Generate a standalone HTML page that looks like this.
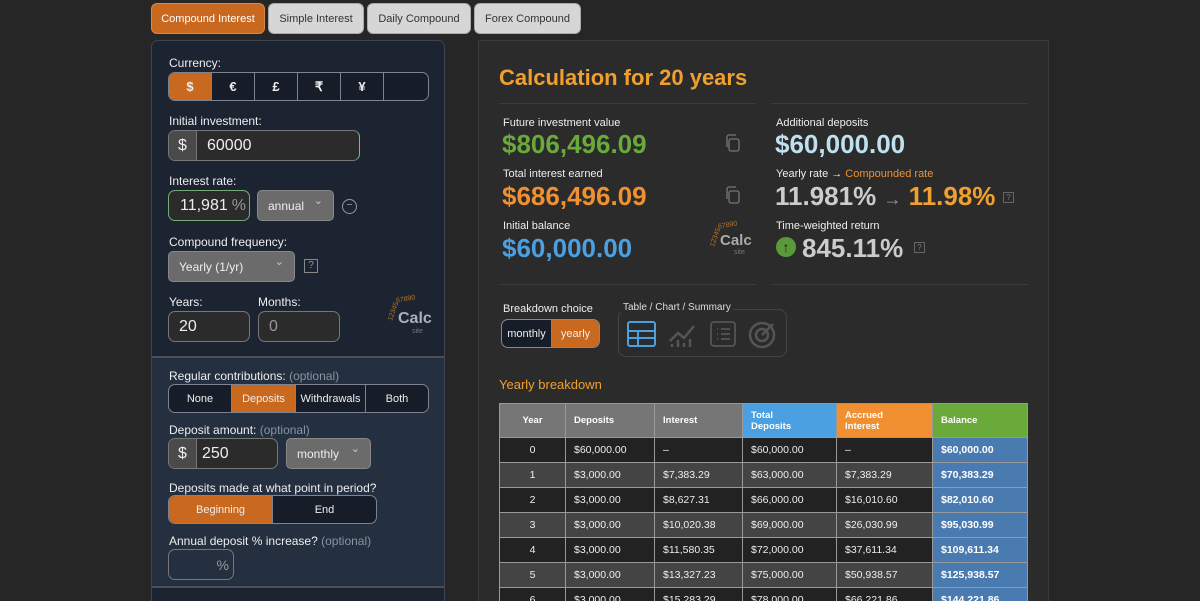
<!DOCTYPE html>
<html><head><meta charset="utf-8"><style>
*{box-sizing:border-box;margin:0;padding:0}
html,body{width:1200px;height:601px;overflow:hidden}
body{background:#262626;font-family:"Liberation Sans",sans-serif;position:relative;color:#e8e8e8}
.a{position:absolute}
.tab{position:absolute;top:3px;height:31px;border-radius:6px;background:#d6d6d6;color:#333;font-size:11px;display:flex;align-items:center;justify-content:center;border:1px solid #aaa}
.lp{position:absolute;left:151px;top:40px;width:294px;height:570px;background:#1c2331;border:1px solid #3c4455;border-radius:7px;overflow:hidden}
.lbl{position:absolute;left:17px;font-size:12px;color:#eee}
.opt{color:#8a93a0}
.grp{position:absolute;display:flex;border:1px solid #7d8390;border-radius:7px;overflow:hidden;background:#161c28}
.grp div{display:flex;align-items:center;justify-content:center;font-size:11px;color:#eee;border-right:1px solid #7d8390}
.grp div:last-child{border-right:none}
.on{background:#c8691f}
.inp{position:absolute;border:1px solid #777;border-radius:7px;background:#2b2b2b;display:flex;align-items:center;font-size:16px;color:#eee;overflow:hidden}
.sel{position:absolute;border:1px solid #888;border-radius:5px;background:#6b6b6b;font-size:12px;color:#eee;display:flex;align-items:center;padding-left:10px}
.sel:after{content:"⌄";position:absolute;right:10px;top:3px;font-size:11px;color:#ccc}
.rp{position:absolute;left:478px;top:40px;width:571px;height:570px;background:#2b2b2b;border:1px solid #3a3a3a}
.sl{position:absolute;font-size:11px;color:#eee}
.sv{position:absolute;font-size:26px;font-weight:bold}
table{position:absolute;left:499px;top:403px;border-collapse:collapse;font-size:10.5px}
td,th{border:1px solid #999;height:25px;padding-left:8px;text-align:left;color:#eee}
th{height:34px;background:#767676;font-weight:bold;color:#fff;font-size:9.5px}
tr:nth-child(even) td{background:#222}
tr:nth-child(odd) td{background:#444}
td.b{background:#4a7bb0!important;font-weight:bold;color:#fff}
td:first-child{text-align:center;padding:0}
.q{position:absolute;width:11px;height:11px;border:1px solid #666;font-size:8px;color:#777;text-align:center;line-height:9px}
.logo{position:absolute}
.logo .c{position:absolute;font-size:16px;font-weight:bold;color:#aab0bc}
.logo .n{position:absolute;font-size:7px;color:#b4742a}
</style></head><body>
<div class="tab" style="left:151px;width:114px;background:#c8691f;color:#fff;border-color:#d8894a">Compound Interest</div>
<div class="tab" style="left:268px;width:96px">Simple Interest</div>
<div class="tab" style="left:367px;width:104px">Daily Compound</div>
<div class="tab" style="left:474px;width:107px">Forex Compound</div>

<div class="lp">
<div class="lbl" style="top:15px">Currency:</div>
<div class="grp" style="left:16px;top:31px;width:261px;height:29px"><div class="on" style="width:43px;font-weight:bold;font-size:13px">$</div><div style="width:43px;font-size:13px;font-weight:bold">€</div><div style="width:43px;font-size:13px;font-weight:bold">£</div><div style="width:43px;font-size:13px;font-weight:bold">₹</div><div style="width:43px;font-size:13px;font-weight:bold">¥</div><div style="flex:1"></div></div>
<div class="lbl" style="top:73px">Initial investment:</div>
<div class="inp" style="left:16px;top:89px;width:192px;height:31px;border-right-color:#6c6"><span style="width:28px;height:100%;background:#4a4a4a;display:flex;align-items:center;justify-content:center;border-right:1px solid #777">$</span><span style="padding-left:10px">60000</span></div>
<div class="lbl" style="top:133px">Interest rate:</div>
<div class="inp" style="left:16px;top:149px;width:82px;height:31px;border-color:#7a7;padding-left:11px">11,981<span style="color:#999;margin-left:4px">%</span></div>
<div class="sel" style="left:105px;top:149px;width:77px;height:31px">annual</div>
<div class="a" style="left:190px;top:158px;width:15px;height:15px;border:1px solid #999;border-radius:50%;font-size:10px;color:#aaa;text-align:center;line-height:12px">−</div>
<div class="lbl" style="top:194px">Compound frequency:</div>
<div class="sel" style="left:16px;top:210px;width:127px;height:31px">Yearly (1/yr)</div>
<div class="q" style="left:152px;top:218px;width:14px;height:14px;line-height:12px;font-size:10px;border-color:#888;color:#999">?</div>
<div class="lbl" style="top:254px">Years:</div><div class="lbl" style="left:106px;top:254px">Months:</div>
<div class="inp" style="left:16px;top:270px;width:82px;height:31px;padding-left:10px">20</div>
<div class="inp" style="left:106px;top:270px;width:82px;height:31px;padding-left:10px;color:#999">0</div>
<div class="logo" style="left:238px;top:255px"><div class="n" style="left:6px;top:0;transform:rotate(-10deg)">67890</div><div class="n" style="left:-6px;top:12px;transform:rotate(-70deg)">12345</div><div class="c" style="left:8px;top:14px">Calc</div><div class="n" style="left:22px;top:32px;color:#777">site</div></div>
<div class="a" style="left:0;top:315px;width:294px;height:232px;background:#243040;border-top:2px solid #4a4f58;border-bottom:2px solid #4a4f58"></div>
<div class="lbl" style="top:328px">Regular contributions: <span class="opt">(optional)</span></div>
<div class="grp" style="left:16px;top:343px;width:261px;height:29px"><div style="width:63px">None</div><div class="on" style="width:64px">Deposits</div><div style="width:70px">Withdrawals</div><div style="flex:1">Both</div></div>
<div class="lbl" style="top:382px">Deposit amount: <span class="opt">(optional)</span></div>
<div class="inp" style="left:16px;top:397px;width:110px;height:31px"><span style="width:28px;height:100%;background:#4a4a4a;display:flex;align-items:center;justify-content:center;border-right:1px solid #777">$</span><span style="padding-left:5px">250</span></div>
<div class="sel" style="left:134px;top:397px;width:85px;height:31px">monthly</div>
<div class="lbl" style="top:440px">Deposits made at what point in period?</div>
<div class="grp" style="left:16px;top:454px;width:209px;height:29px"><div class="on" style="width:104px">Beginning</div><div style="flex:1">End</div></div>
<div class="lbl" style="top:493px">Annual deposit % increase? <span class="opt">(optional)</span></div>
<div class="inp" style="left:16px;top:508px;width:66px;height:31px;justify-content:flex-end;padding-right:4px;color:#999;font-size:14px;background:#243040">%</div>
</div>

<div class="rp"></div>
<div class="a" style="left:499px;top:65px;font-size:22px;font-weight:bold;color:#f0a030">Calculation for 20 years</div>
<div class="a" style="left:499px;top:103px;width:257px;border-top:1px solid #3c3c3c"></div>
<div class="a" style="left:771px;top:103px;width:257px;border-top:1px solid #3c3c3c"></div>
<div class="a" style="left:499px;top:284px;width:257px;border-top:1px solid #3c3c3c"></div>
<div class="a" style="left:771px;top:284px;width:257px;border-top:1px solid #3c3c3c"></div>
<div class="sl" style="left:503px;top:117px">Future investment value</div>
<div class="sv" style="left:502px;top:129px;color:#6aaa3a">$806,496.09</div>
<div class="sl" style="left:503px;top:168px">Total interest earned</div>
<div class="sv" style="left:502px;top:181px;color:#f09030">$686,496.09</div>
<div class="sl" style="left:503px;top:220px">Initial balance</div>
<div class="sv" style="left:502px;top:233px;color:#4aa0e0">$60,000.00</div>
<svg class="a" style="left:724px;top:134px" width="18" height="18" fill="none" stroke="#777" stroke-width="1.3"><rect x="5" y="5" width="10" height="12" rx="2"/><path d="M3 13V3a2 2 0 0 1 2-2h7"/></svg>
<svg class="a" style="left:724px;top:186px" width="18" height="18" fill="none" stroke="#777" stroke-width="1.3"><rect x="5" y="5" width="10" height="12" rx="2"/><path d="M3 13V3a2 2 0 0 1 2-2h7"/></svg>
<div class="logo" style="left:712px;top:222px"><div class="n" style="left:6px;top:0;transform:rotate(-10deg)">67890</div><div class="n" style="left:-6px;top:12px;transform:rotate(-70deg)">12345</div><div class="c" style="left:8px;top:10px;font-size:15px;color:#aaa">Calc</div><div class="n" style="left:22px;top:27px;color:#777">site</div></div>
<div class="sl" style="left:776px;top:117px">Additional deposits</div>
<div class="sv" style="left:775px;top:129px;color:#bfe0ee">$60,000.00</div>
<div class="sl" style="left:776px;top:168px">Yearly rate → <span style="color:#f09030">Compounded rate</span></div>
<div class="sv" style="left:775px;top:181px;color:#ccc">11.981% <span style="font-size:18px;color:#999;font-weight:normal">→</span> <span style="color:#f0a030">11.98%</span></div>
<div class="q" style="left:1003px;top:192px">?</div>
<div class="sl" style="left:776px;top:220px">Time-weighted return</div>
<div class="a" style="left:776px;top:237px;width:20px;height:20px;border-radius:50%;background:#5a9a3a;color:#1a1a1a;font-size:14px;font-weight:bold;text-align:center;line-height:20px">↑</div>
<div class="sv" style="left:802px;top:233px;color:#ccc">845.11%</div>
<div class="q" style="left:914px;top:242px">?</div>
<div class="sl" style="left:503px;top:303px">Breakdown choice</div>
<div class="grp" style="left:501px;top:319px;width:99px;height:29px;border-color:#888"><div style="width:50px">monthly</div><div class="on" style="flex:1">yearly</div></div>
<div class="a" style="left:618px;top:309px;width:169px;height:48px;border:1px solid #444;border-radius:8px"></div>
<div class="a" style="left:621px;top:302px;background:#2b2b2b;padding:0 2px;font-size:10px;color:#ddd">Table / Chart / Summary</div>
<svg class="a" style="left:627px;top:321px" width="30" height="27" fill="none" stroke="#4aa0e0" stroke-width="2"><rect x="1" y="1" width="27" height="24" rx="2"/><path d="M1 10h27M1 17h27M11 10v15"/></svg>
<svg class="a" style="left:668px;top:321px" width="30" height="27" fill="none" stroke="#555" stroke-width="2.5"><path d="M2 20l8-8 6 5 10-12"/><path d="M4 26v-3M10 26v-7M16 26v-4M22 26v-8"/></svg>
<svg class="a" style="left:710px;top:321px" width="26" height="27" fill="none" stroke="#555" stroke-width="1.8"><rect x="1" y="1" width="24" height="24" rx="3"/><path d="M7 8h1M7 13h1M7 18h1M11 8h9M11 13h9M11 18h9"/></svg>
<svg class="a" style="left:748px;top:320px" width="30" height="30" fill="none" stroke="#555" stroke-width="2.5"><circle cx="14" cy="15" r="12"/><circle cx="14" cy="15" r="6"/><path d="M14 15l11-11"/></svg>
<div class="a" style="left:499px;top:377px;font-size:13px;color:#f0a030">Yearly breakdown</div>
<table>
<tr><th style="width:66px;text-align:center;padding:0">Year</th><th style="width:89px">Deposits</th><th style="width:88px">Interest</th><th style="width:94px;background:#4aa0e0">Total<br>Deposits</th><th style="width:96px;background:#f09030">Accrued<br>Interest</th><th style="width:95px;background:#6aaa3a">Balance</th></tr>
<tr><td>0</td><td>$60,000.00</td><td>–</td><td>$60,000.00</td><td>–</td><td class="b">$60,000.00</td></tr>
<tr><td>1</td><td>$3,000.00</td><td>$7,383.29</td><td>$63,000.00</td><td>$7,383.29</td><td class="b">$70,383.29</td></tr>
<tr><td>2</td><td>$3,000.00</td><td>$8,627.31</td><td>$66,000.00</td><td>$16,010.60</td><td class="b">$82,010.60</td></tr>
<tr><td>3</td><td>$3,000.00</td><td>$10,020.38</td><td>$69,000.00</td><td>$26,030.99</td><td class="b">$95,030.99</td></tr>
<tr><td>4</td><td>$3,000.00</td><td>$11,580.35</td><td>$72,000.00</td><td>$37,611.34</td><td class="b">$109,611.34</td></tr>
<tr><td>5</td><td>$3,000.00</td><td>$13,327.23</td><td>$75,000.00</td><td>$50,938.57</td><td class="b">$125,938.57</td></tr>
<tr><td>6</td><td>$3,000.00</td><td>$15,283.29</td><td>$78,000.00</td><td>$66,221.86</td><td class="b">$144,221.86</td></tr>
</table>
</body></html>
